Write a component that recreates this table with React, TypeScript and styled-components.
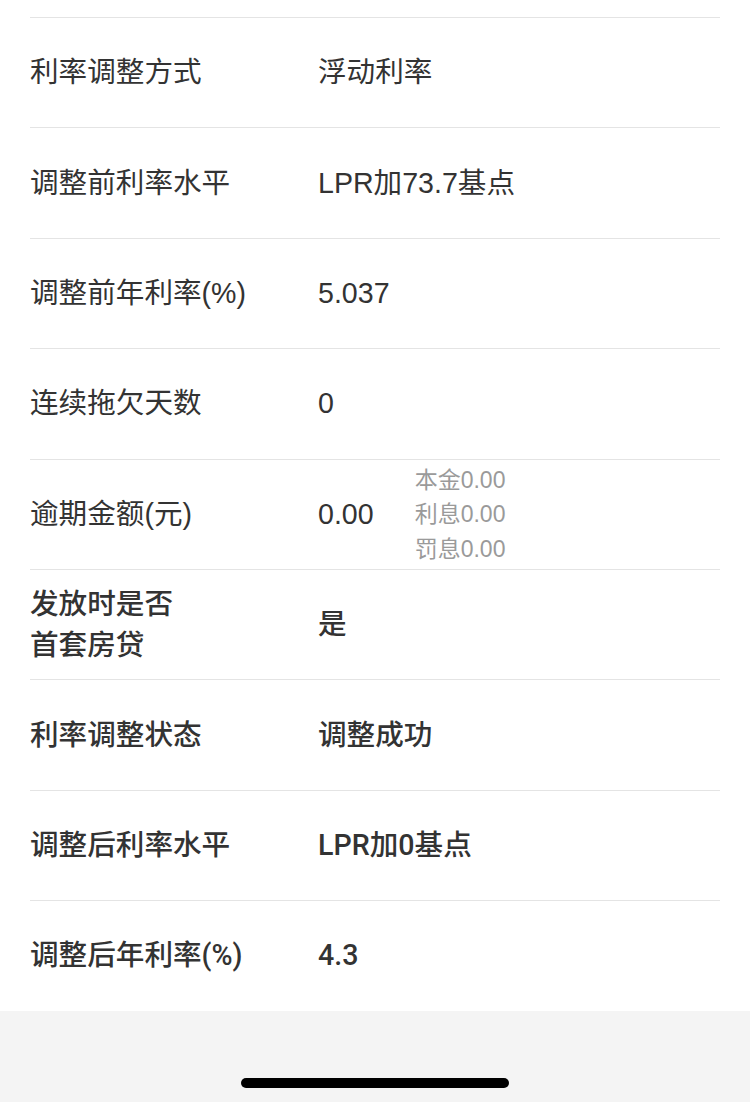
import React from "react";
import styled, { createGlobalStyle } from "styled-components";

const GlobalStyle = createGlobalStyle`
    html, body {
        margin: 0;
        padding: 0;
        background: #f4f4f4;
    }
    body {
        font-family: "Liberation Sans", "Noto Sans CJK SC", sans-serif;
        color: #333333;
    }
`;

const Page = styled.div`
    width: 750px;
    height: 1102px;
    display: flex;
    flex-direction: column;
    background: #f4f4f4;
`;

const Card = styled.div`
    background: #ffffff;
    padding: 17px 30px 0;
`;

const Row = styled.div`
    height: 110.4px;
    box-sizing: border-box;
    border-top: 1px solid #e4e4e4;
    display: flex;
    align-items: center;
`;

const Label = styled.div<{ $bold?: boolean }>`
    width: 288px;
    flex-shrink: 0;
    font-size: 28.6px;
    line-height: 41px;
    color: #333333;
    font-family: ${props => (props.$bold ? `Roboto, "Noto Sans CJK SC", sans-serif` : `"Liberation Sans", "Noto Sans CJK SC", sans-serif`)};
    font-weight: ${props => (props.$bold ? 500 : 400)};
`;

const Value = styled.div<{ $bold?: boolean }>`
    font-size: 28.6px;
    line-height: 41px;
    color: #333333;
    font-family: ${props => (props.$bold ? `Roboto, "Noto Sans CJK SC", sans-serif` : `"Liberation Sans", "Noto Sans CJK SC", sans-serif`)};
    font-weight: ${props => (props.$bold ? 500 : 400)};
`;

const ValueWrap = styled.div`
    display: flex;
    align-items: center;
`;

const SubList = styled.div`
    display: flex;
    flex-direction: column;
    margin-left: 41px;
`;

const SubItem = styled.div`
    font-size: 23px;
    line-height: 34.5px;
    color: #9a9a9a;
`;

const Footer = styled.div`
    flex: 1;
    display: flex;
    align-items: flex-end;
    justify-content: center;
    padding-bottom: 14px;
`;

const HomeBar = styled.div`
    width: 268px;
    height: 10px;
    border-radius: 5px;
    background: #000000;
`;

interface IRowData {
    label: React.ReactNode;
    value: string;
    bold?: boolean;
}

const rows: IRowData[] = [
    { label: "利率调整方式", value: "浮动利率" },
    { label: "调整前利率水平", value: "LPR加73.7基点" },
    { label: "调整前年利率(%)", value: "5.037" },
    { label: "连续拖欠天数", value: "0" },
];

const boldRows: IRowData[] = [
    { label: <>发放时是否<br />首套房贷</>, value: "是", bold: true },
    { label: "利率调整状态", value: "调整成功", bold: true },
    { label: "调整后利率水平", value: "LPR加0基点", bold: true },
    { label: "调整后年利率(%)", value: "4.3", bold: true },
];

function App() {
    return (
        <Page>
            <GlobalStyle />
            <Card>
                {rows.map((item, index) => (
                    <Row key={index}>
                        <Label>{item.label}</Label>
                        <Value>{item.value}</Value>
                    </Row>
                ))}

                <Row>
                    <Label>逾期金额(元)</Label>
                    <ValueWrap>
                        <Value>0.00</Value>
                        <SubList>
                            <SubItem>本金0.00</SubItem>
                            <SubItem>利息0.00</SubItem>
                            <SubItem>罚息0.00</SubItem>
                        </SubList>
                    </ValueWrap>
                </Row>

                {boldRows.map((item, index) => (
                    <Row key={`b_${index}`}>
                        <Label $bold>{item.label}</Label>
                        <Value $bold>{item.value}</Value>
                    </Row>
                ))}
            </Card>
            <Footer>
                <HomeBar />
            </Footer>
        </Page>
    );
}

export default App;
